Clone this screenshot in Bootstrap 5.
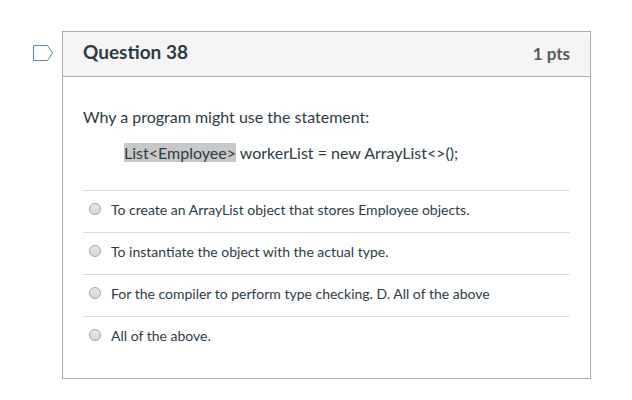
<!DOCTYPE html>
<html lang="en">
<head>
<meta charset="utf-8">
<meta name="viewport" content="width=device-width, initial-scale=1">
<title>Question 38</title>
<link href="https://cdn.jsdelivr.net/npm/bootstrap@5.3.0/dist/css/bootstrap.min.css" rel="stylesheet">
<style>
body { font-family: Lato, "Liberation Sans", sans-serif; font-size: 16px; line-height: 24px; color: #2d3b45; background: #fff; }
.quiz { padding: 31px 41px 21px 32px; }
.flag-btn { width: 22px; margin: 13px 8px 0 0; line-height: 0; }
.question { border: 1px solid #aaa; border-radius: 0; color: inherit; }
.question-head { background: #f5f5f5; border-bottom: 1px solid #aaa; border-radius: 0; padding: 6px 20px 8px; }
.question-name { font-size: 19px; line-height: 28px; font-weight: 700; }
.question-points { font-size: 17px; line-height: 28px; font-weight: 700; color: #595959; padding-top: 2px; }
.question-body { padding: 28px 20px 20px; }
.statement { margin: 12px 0 25px; padding-left: 41px; }
.picked { background: #c8c8c8; color: inherit; }
.answer { border-top: 1px solid #ddd; padding: 9px 6px 12px; font-size: 14px; line-height: 20px; }
.answer-radio { appearance: none; width: 12px; height: 12px; margin: 3px 10px 5px 0; border: 1px solid #a2a2a2; border-radius: 50%; background: linear-gradient(#e9e9e9, #d6d6d6); }
.answer-radio:checked { background: radial-gradient(#555 3px, #e0e0e0 4px); }
</style>
<script src="https://cdn.jsdelivr.net/npm/bootstrap@5.3.0/dist/js/bootstrap.bundle.min.js"></script>
</head>
<body>
<main class="quiz d-flex align-items-start">
  <button type="button" class="flag-btn border-0 bg-transparent p-0 flex-shrink-0" aria-label="Flag question">
    <svg width="22" height="18" viewBox="0 0 22 18" fill="none" stroke="#5b8aa6" aria-hidden="true"><path d="M1.5 1.5H15.5L20.5 9L15.5 16.5H1.5Z"/></svg>
  </button>
  <section class="question card flex-grow-1">
    <header class="question-head card-header d-flex justify-content-between">
      <h1 class="question-name mb-0">Question 38</h1>
      <span class="question-points">1 pts</span>
    </header>
    <div class="question-body card-body">
      <p class="mb-0">Why a program might use the statement:</p>
      <p class="statement"><span class="picked">List&lt;Employee&gt;</span> workerList = new ArrayList&lt;&gt;();</p>
      <div role="radiogroup" aria-label="Answers">
        <div class="answer d-flex"><input class="answer-radio flex-shrink-0" type="radio" name="q38" id="a1"><label for="a1">To create an ArrayList object that stores Employee objects.</label></div>
        <div class="answer d-flex"><input class="answer-radio flex-shrink-0" type="radio" name="q38" id="a2"><label for="a2">To instantiate the object with the actual type.</label></div>
        <div class="answer d-flex"><input class="answer-radio flex-shrink-0" type="radio" name="q38" id="a3"><label for="a3">For the compiler to perform type checking. D. All of the above</label></div>
        <div class="answer d-flex"><input class="answer-radio flex-shrink-0" type="radio" name="q38" id="a4"><label for="a4">All of the above.</label></div>
      </div>
    </div>
  </section>
</main>
</body>
</html>
